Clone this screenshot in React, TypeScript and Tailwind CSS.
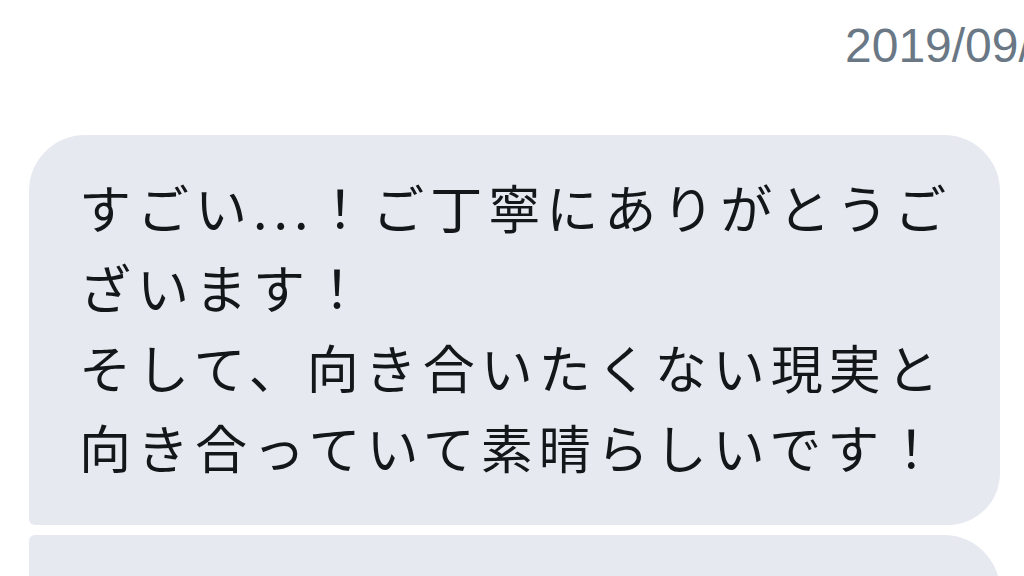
const jp = '"Noto Sans CJK JP", "Noto Sans", sans-serif';

const lines = [
  'すごい...！ご丁寧にありがとうご',
  'ざいます！',
  'そして、向き合いたくない現実と',
  '向き合っていて素晴らしいです！',
];

export default function App() {
  return (
    <div className="h-[576px] w-[1024px] overflow-hidden bg-white">
      {/* date header, cut off on the right */}
      <div
        className="overflow-hidden whitespace-nowrap pl-[845px] pt-[20px] text-[48px] leading-[52px] text-[#6a7886]"
        style={{ fontFamily: '"Liberation Sans", Arial, sans-serif' }}
      >
        2019/09/13 21:04
      </div>

      <div className="flex flex-col gap-[10px] pl-[29px] pt-[63px]">
        <div className="w-[971px] rounded-tl-[56px] rounded-tr-[56px] rounded-br-[52px] rounded-bl-[6px] bg-[#e6e9ef] pb-[38px] pl-[50px] pt-[32px]">
          {lines.map((l) => (
            <p
              key={l}
              className="text-[52px] leading-[80px] tracking-[6px] text-[#14171a]"
              style={{ fontFamily: jp }}
            >
              {l}
            </p>
          ))}
        </div>
        <div className="h-[120px] w-[971px] rounded-tl-[6px] rounded-tr-[56px] bg-[#e6e9ef]" />
      </div>
    </div>
  );
}
